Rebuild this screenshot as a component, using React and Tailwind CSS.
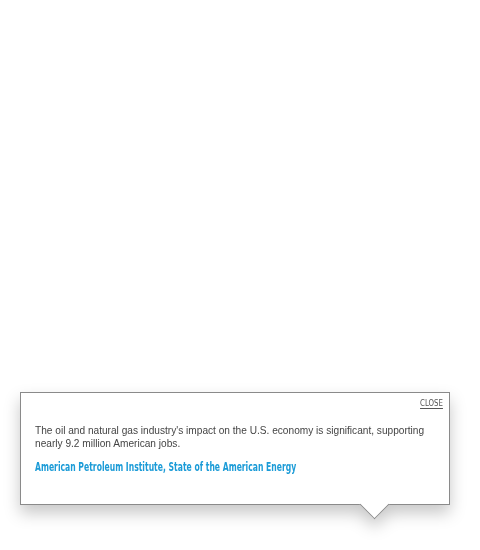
export default function App() {
  return (
    <div className="w-[480px] h-[550px] bg-white pt-[392px] pl-[20px]">
      <div className="relative w-[430px] h-[113px] drop-shadow-[0_8px_8px_rgba(0,0,0,0.22)]">
        <div className="relative w-full h-full bg-white border border-[#8a8a8a]">
          <div className="flex justify-end pt-[4px] pr-[6px]">
            <span className="inline-block origin-right scale-x-[0.82] text-[9.5px] leading-[11px] text-[#555] underline underline-offset-[2px] font-['DejaVu_Sans_Condensed',sans-serif] cursor-pointer">
              CLOSE
            </span>
          </div>
          <p className="mt-[16px] pl-[14px] pr-[10px] text-[10.15px] leading-[13px] text-[#444] font-['Liberation_Sans',sans-serif]">
            The oil and natural gas industry's impact on the U.S. economy is significant, supporting nearly 9.2 million American jobs.
          </p>
          <div className="flex mt-[10px] pl-[14px]">
            <span className="inline-block whitespace-nowrap origin-left scale-x-[0.71] text-[12px] leading-[14px] font-bold text-[#1b9bd7] font-['DejaVu_Sans_Condensed',sans-serif] cursor-pointer">
              American Petroleum Institute, State of the American Energy
            </span>
          </div>
          <div className="absolute left-[343px] top-[101px] w-[21px] h-[21px] rotate-45 bg-white border-r border-b border-[#8a8a8a]"></div>
        </div>
      </div>
    </div>
  );
}
